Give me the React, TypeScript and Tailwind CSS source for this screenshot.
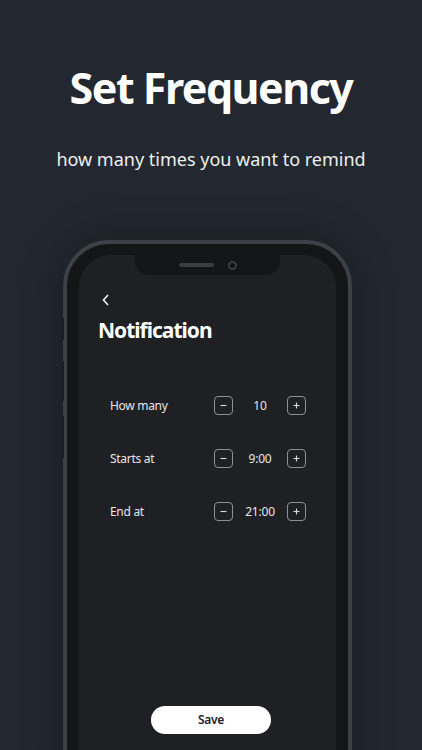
import React from 'react';

const font = { fontFamily: '"Noto Sans", "Open Sans", sans-serif' };

const rows = [
  { label: 'How many', value: '10' },
  { label: 'Starts at', value: '9:00' },
  { label: 'End at', value: '21:00' },
];

const StepButton: React.FC<{ sign: 'minus' | 'plus' }> = ({ sign }) => (
  <button className="w-[19px] h-[19px] rounded-[4px] border border-[#8e9094] flex items-center justify-center">
    <svg width="9" height="9" viewBox="0 0 9 9" stroke="#d8d8d8" strokeWidth="1.1">
      <line x1="1.5" y1="4.5" x2="7.5" y2="4.5" />
      {sign === 'plus' && <line x1="4.5" y1="1.5" x2="4.5" y2="7.5" />}
    </svg>
  </button>
);

export default function App() {
  return (
    <div className="w-[422px] h-[750px] overflow-hidden bg-[#232830] text-white" style={font}>
      {/* Header */}
      <div className="pt-[59px] text-center">
        <h1 className="text-[43px] font-bold leading-[58px] tracking-[-1.5px] text-white">Set Frequency</h1>
        <p className="mt-[29px] text-[18px] leading-[26px] text-[#eeeeee]">how many times you want to remind</p>
      </div>

      {/* Phone */}
      <div className="relative ml-[63px] mt-[68px] w-[289px] h-[560px] rounded-[46px] border-[4px] border-[#3b4146] bg-[#141516] pt-[11px] px-[12px] shadow-[0_0_40px_rgba(0,0,0,0.35)]">
        <div className="absolute left-[-6px] top-[74px] w-[3px] h-[22px] rounded-l bg-[#1b1f25]" />
        <div className="absolute left-[-6px] top-[117px] w-[3px] h-[40px] rounded-l bg-[#1b1f25]" />
        <div className="absolute left-[-6px] top-[172px] w-[3px] h-[42px] rounded-l bg-[#1b1f25]" />

        <div className="relative h-[600px] rounded-[32px] bg-[#1f2024] px-[19px]">
          {/* Notch */}
          <div className="absolute left-[56px] top-0 w-[145px] h-[20px] rounded-b-[14px] bg-[#141516] flex items-center justify-center gap-[14px]">
            <div className="w-[35px] h-[4px] rounded-full bg-[#3a3c40]" />
            <div className="w-[9px] h-[9px] rounded-full border-[2px] border-[#3a3c40] bg-[#101112]" />
          </div>

          <div className="pt-[38px]">
            <svg width="10" height="14" viewBox="0 0 10 14" fill="none" stroke="#f2f2f2" strokeWidth="1.6" className="ml-[3px]">
              <polyline points="7,2 2.5,7 7,12" />
            </svg>
          </div>
          <h2 className="mt-[8px] text-[21px] font-bold leading-[30px] tracking-[-1px] text-white">Notification</h2>

          <div className="mt-[51px] flex flex-col gap-[34px] pl-[12px]">
            {rows.map((r) => (
              <div key={r.label} className="flex items-center h-[19px]">
                <span className="w-[104px] text-[12px] tracking-[-0.3px] text-[#e6e6e6]">{r.label}</span>
                <StepButton sign="minus" />
                <span className="w-[54px] text-center text-[12px] tracking-[-0.2px] text-[#e6e6e6]">{r.value}</span>
                <StepButton sign="plus" />
              </div>
            ))}
          </div>

          <button className="mt-[185px] ml-[53px] w-[120px] h-[28px] rounded-full bg-white text-[12px] font-semibold tracking-[-0.3px] text-[#1f2024]">
            Save
          </button>
        </div>
      </div>
    </div>
  );
}
